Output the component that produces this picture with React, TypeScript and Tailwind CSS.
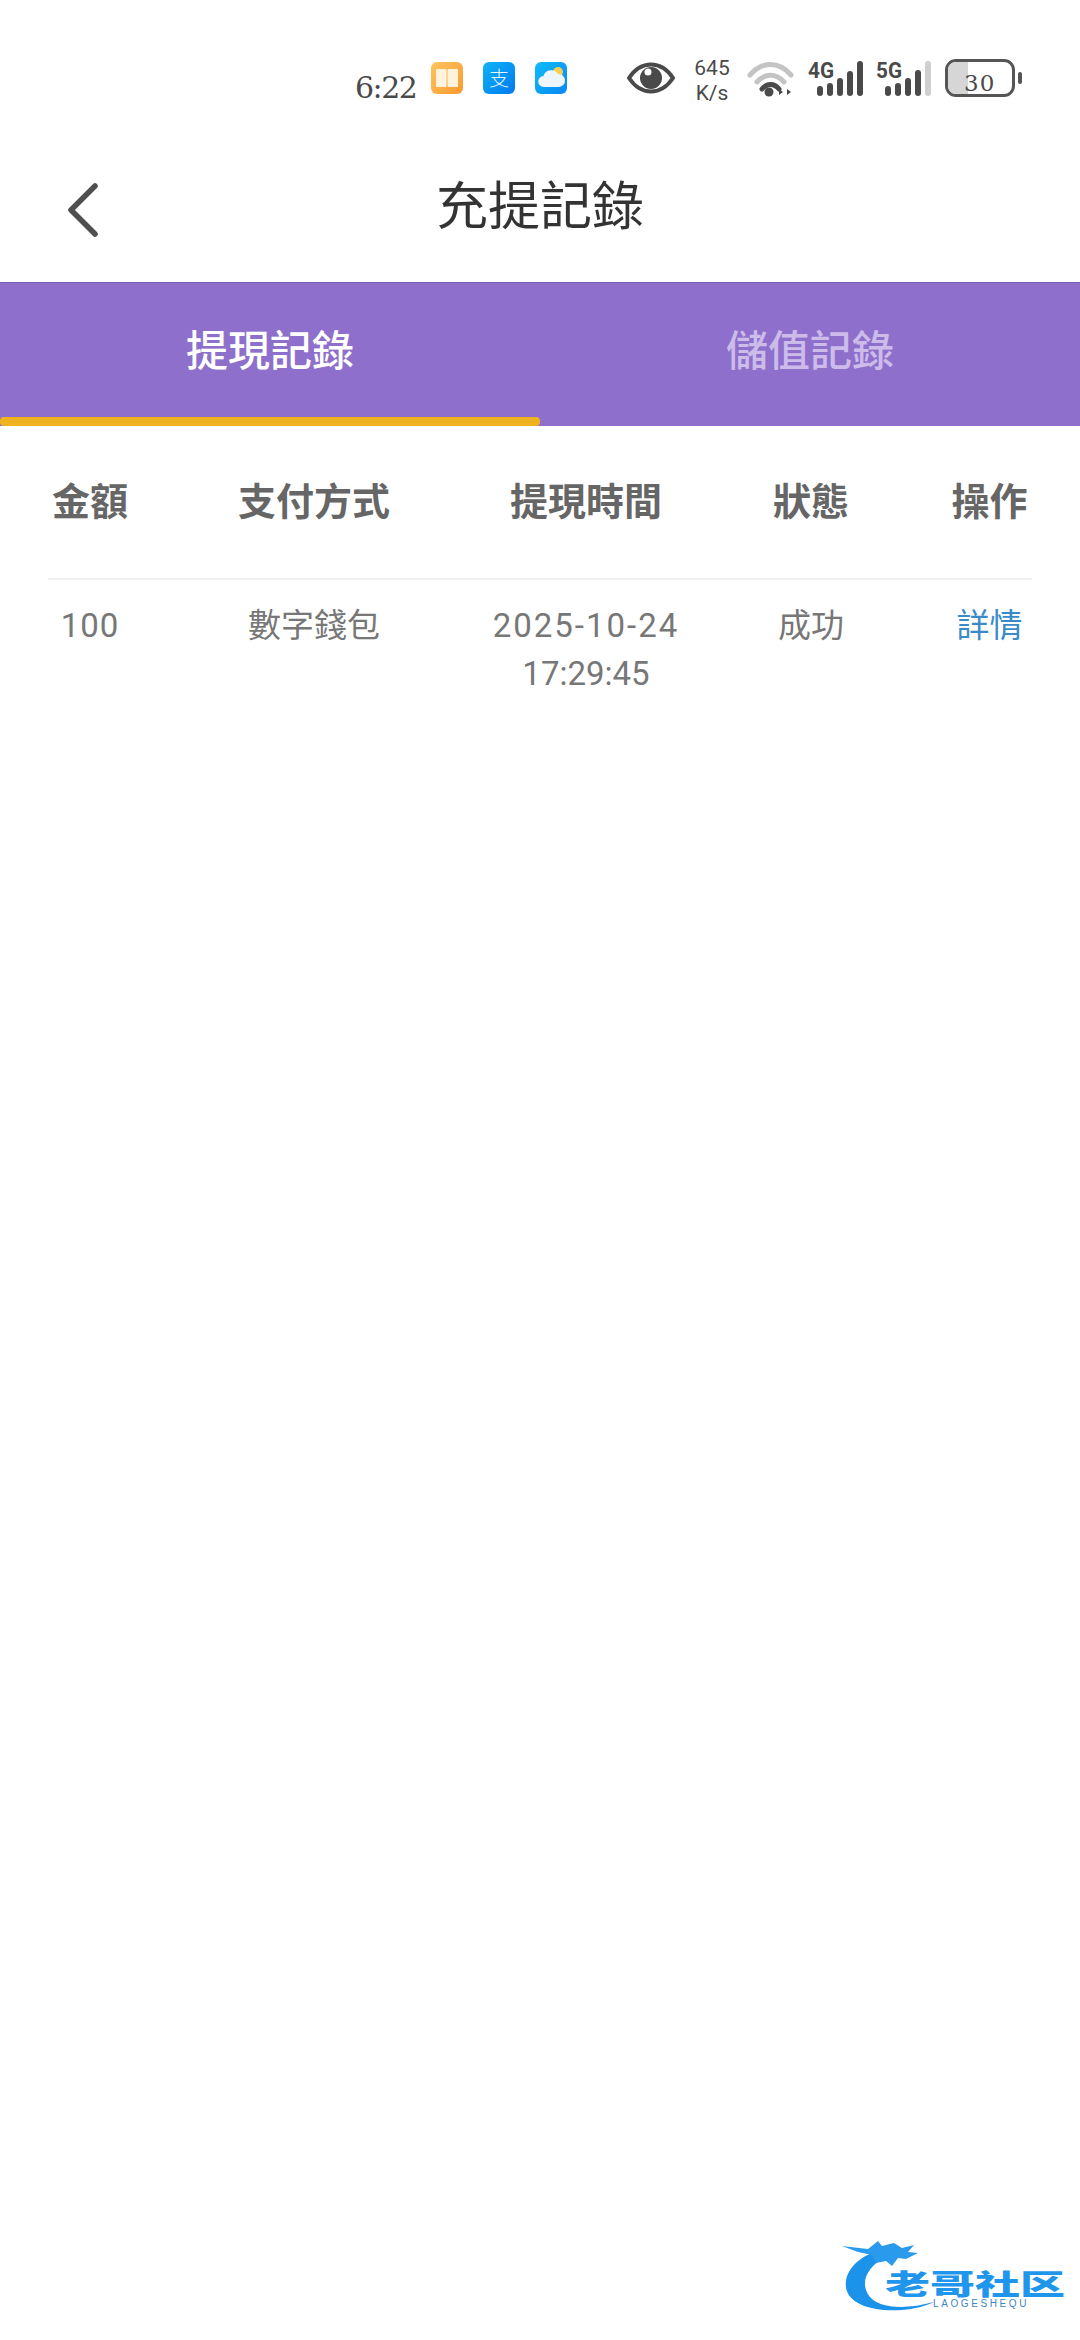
import React from "react";

const cjk = "font-['Roboto','Noto_Sans_CJK_TC',sans-serif]";

const SignalIcon = ({ label, heights, greyLast }: { label: string; heights: number[]; greyLast?: boolean }) => (
  <svg className="-mt-[6px]" width="56" height="44" viewBox="0 -6 56 44">
    <text x="0" y="18" fontSize="22" fontWeight="700" fill="#4a4a4a" fontFamily="Roboto" textLength="26" lengthAdjust="spacingAndGlyphs">
      {label}
    </text>
    {heights.map((h, i) => (
      <rect
        key={i}
        x={9 + i * 10}
        y={36 - h}
        width="6"
        height={h}
        rx="3"
        fill={greyLast && i === heights.length - 1 ? "#cfcfcf" : "#4a4a4a"}
      />
    ))}
  </svg>
);

const StatusBar = () => (
  <div className="h-[110px] flex items-start pl-[355px] pt-[59px] text-[#4a4a4a]">
    <span className="w-[76px] mt-[12px] text-[30px] leading-[34px] font-['DejaVu_Serif',serif] tracking-[-1.5px]">6:22</span>
    <div className="w-[32px] h-[32px] mt-[3px] rounded-[6px] bg-gradient-to-br from-[#fdc45e] to-[#f99a2c] flex items-center justify-center">
      <svg width="22" height="18" viewBox="0 0 22 18">
        <rect x="0" y="0" width="10.5" height="18" rx="1" fill="#fff3dc" />
        <rect x="11.5" y="0" width="10.5" height="18" rx="1" fill="#fff3dc" />
      </svg>
    </div>
    <div className="w-[32px] h-[32px] mt-[3px] ml-[20px] rounded-[6px] bg-gradient-to-br from-[#14b4f5] to-[#0a78f0] flex items-center justify-center text-[#e6f4ff] text-[20px] leading-none font-light font-['Noto_Sans_CJK_SC',sans-serif]">
      支
    </div>
    <div className="w-[32px] h-[32px] mt-[3px] ml-[20px] rounded-[6px] bg-gradient-to-br from-[#12bdfa] to-[#0d86f2]">
      <svg width="32" height="32" viewBox="0 0 32 32">
        <circle cx="23" cy="10" r="5" fill="#f6cf5a" />
        <path d="M9 25a5.5 5.5 0 0 1-.5-11 8 8 0 0 1 14.5-2 6.5 6.5 0 0 1 1 13z" fill="#eef6fc" />
      </svg>
    </div>
    <svg className="ml-[60px] mt-[3px]" width="48" height="32" viewBox="0 0 48 32">
      <path d="M2 16C8 7 15 2.5 24 2.5S40 7 46 16c-6 9-13 13.5-22 13.5S8 25 2 16z" fill="none" stroke="#4a4a4a" strokeWidth="4" />
      <circle cx="24" cy="16" r="11" fill="#4a4a4a" />
      <circle cx="21" cy="10" r="3.5" fill="#fff" />
    </svg>
    <div className="ml-[17px] w-[40px] -mt-[3px] text-[21px] leading-[25px] font-['Roboto',sans-serif] text-center">
      <div>645</div>
      <div>K/s</div>
    </div>
    <svg className="ml-[15px] mt-[1px]" width="47" height="38" viewBox="0 0 47 38">
      <path d="M3 15C15 1 32 1 44 15" fill="none" stroke="#c4c4c4" strokeWidth="5" strokeLinecap="round" />
      <path d="M10 22c8-9 19-9 27 0" fill="none" stroke="#c4c4c4" strokeWidth="5" strokeLinecap="round" />
      <path d="M15 29c5-6 12-6 17 0" fill="none" stroke="#4a4a4a" strokeWidth="5" strokeLinecap="round" />
      <circle cx="22" cy="32" r="4.5" fill="#4a4a4a" />
      <path d="M36 32l-4 3v-6zM40 29l4 3-4 3z" fill="#4a4a4a" />
    </svg>
    <div className="ml-[14px] mt-[1px]">
      <SignalIcon label="4G" heights={[10, 13, 18, 25, 35]} />
    </div>
    <div className="ml-[12px] mt-[1px]">
      <SignalIcon label="5G" heights={[10, 13, 18, 26, 35]} greyLast />
    </div>
    <div className="ml-[13px] relative w-[70px] h-[38px] rounded-[11px] border-[3px] border-[#555555] overflow-hidden bg-white">
      <div className="w-[20px] h-full bg-[#d6d6d6]" />
      <span className="absolute left-[16px] top-[9px] text-[23px] leading-[24px] tracking-[1px] font-['DejaVu_Serif',serif]">30</span>
    </div>
    <div className="ml-[3px] mt-[13px] w-[4px] h-[12px] rounded-[2px] bg-[#555555]" />
  </div>
);

const Header = () => (
  <div className="h-[172px] relative flex items-center justify-center pt-[24px]">
    <svg className="absolute left-[64px] top-[70px]" width="36" height="60" viewBox="0 0 36 60">
      <path d="M31 6L7 30l24 24" fill="none" stroke="#4f4f4f" strokeWidth="5.5" strokeLinecap="round" strokeLinejoin="round" />
    </svg>
    <h1 className={`${cjk} text-[52px] leading-[60px] text-[#333333] font-normal`}>充提記錄</h1>
  </div>
);

const Tabs = () => (
  <div className={`${cjk} h-[144px] bg-[#8e70cc] border-t border-[#7a5fb0] flex text-[42px] leading-[50px] font-medium`}>
    <div className="w-1/2 flex flex-col items-center">
      <span className="flex-1 flex items-center pt-[4px] text-white">提現記錄</span>
      <div className="w-full h-[9px] bg-[#eeb31e] rounded-[4px]" />
    </div>
    <div className="w-1/2 flex flex-col items-center">
      <span className="flex-1 flex items-center pt-[4px] text-[#cdbcea]">儲值記錄</span>
      <div className="h-[9px]" />
    </div>
  </div>
);

const cols = ["w-[84px] shrink-0", "w-[364px] shrink-0", "w-[180px] shrink-0", "w-[270px] shrink-0", "w-[87px] shrink-0"];

const Table = () => (
  <div className={`${cjk} mx-[48px]`}>
    <div className="h-[154px] flex items-center border-b-2 border-[#f0f0f0] text-[38px] leading-[46px] font-bold text-[#666666]">
      {["金額", "支付方式", "提現時間", "狀態", "操作"].map((t, i) => (
        <div key={t} className={`${cols[i]} flex justify-center whitespace-nowrap`}>{t}</div>
      ))}
    </div>
    <div className="flex pt-[22px] text-[33px] leading-[48px] text-[#777777]">
      <div className={`${cols[0]} flex justify-center tracking-[1px]`}>100</div>
      <div className={`${cols[1]} flex justify-center`}>數字錢包</div>
      <div className={`${cols[2]} flex flex-col items-center whitespace-nowrap`}>
        <span className="tracking-[2px]">2025-10-24</span>
        <span>17:29:45</span>
      </div>
      <div className={`${cols[3]} flex justify-center`}>成功</div>
      <div className={`${cols[4]} flex justify-center text-[#3a8aca] whitespace-nowrap`}>詳情</div>
    </div>
  </div>
);

const Watermark = () => (
  <div className="absolute left-[842px] top-[2240px] w-[225px] h-[76px]">
    <svg className="absolute left-0 top-0" width="100" height="76" viewBox="0 0 100 76">
      <path d="M32 12C12 20 2 34 4 48c3 16 26 24 56 22 12-1 24-4 32-8-26 7-50 7-62-3C18 48 20 28 46 16z" fill="#1c93ea" />
      <path d="M0 6l26 3 10-8 4 5 12-3 8 5 12-3-6 7 10 1-12 6-8-1-6 8-6-5-10 2-4-8-14-3z" fill="#2a9bec" />
    </svg>
    <div className="absolute left-[38px] top-[20px] w-[190px] text-center text-[45px] leading-[45px] font-black text-[#1f95ec] scale-y-[0.62] font-['Noto_Sans_CJK_SC',sans-serif] whitespace-nowrap">
      老哥社区
    </div>
    <div className="absolute left-[91px] top-[58px] text-[10px] leading-[12px] tracking-[2.6px] text-[#3c86c8] font-['Liberation_Sans',sans-serif]">
      LAOGESHEQU
    </div>
  </div>
);

export default function App() {
  return (
    <div className="relative w-[1080px] h-[2340px] bg-white overflow-hidden">
      <StatusBar />
      <Header />
      <Tabs />
      <Table />
      <Watermark />
    </div>
  );
}
